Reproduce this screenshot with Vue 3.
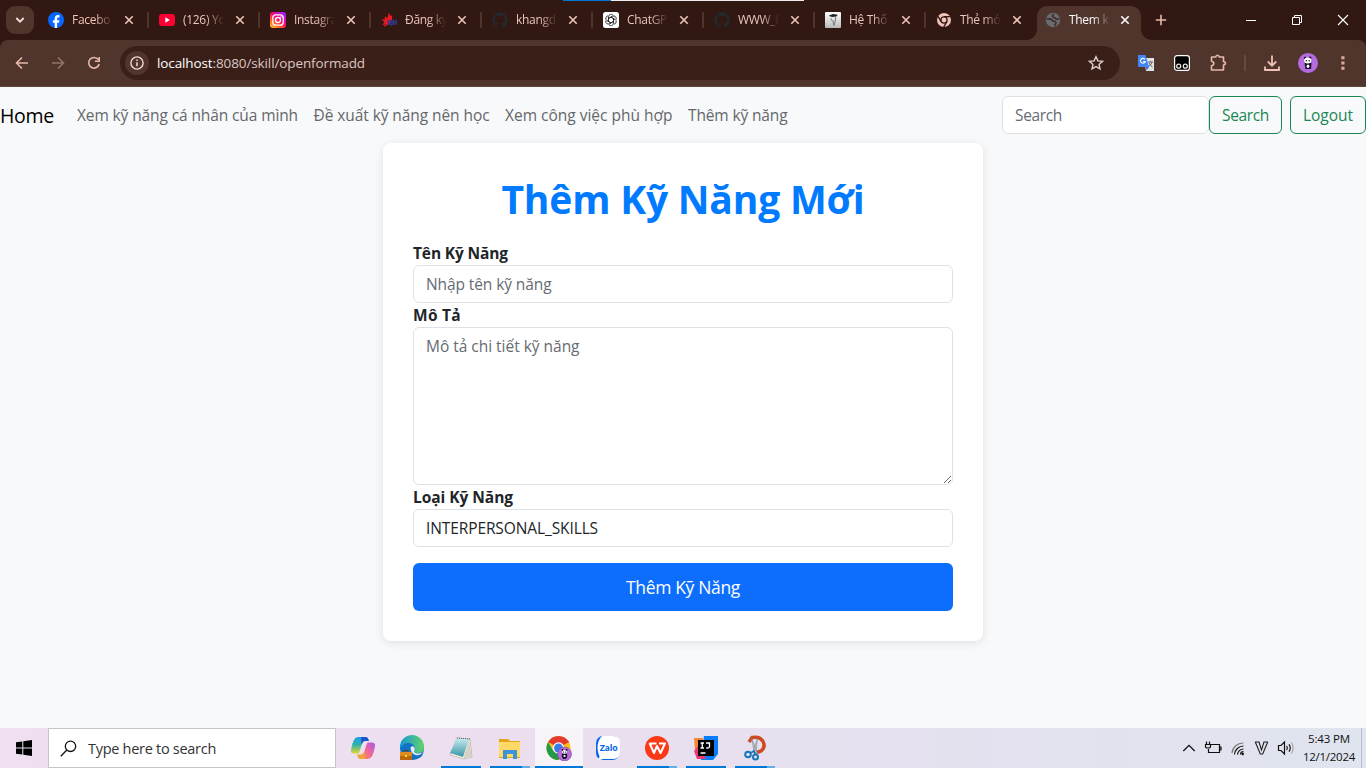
<script setup>
const tabs = [
  { icon: 'facebook', title: 'Facebo' },
  { icon: 'youtube', title: '(126) Yo' },
  { icon: 'instagram', title: 'Instagra' },
  { icon: 'iuh', title: 'Đăng ký' },
  { icon: 'github', title: 'khangd' },
  { icon: 'chatgpt', title: 'ChatGP' },
  { icon: 'github', title: 'WWW_f' },
  { icon: 'school', title: 'Hệ Thố' },
  { icon: 'chrome', title: 'Thẻ mớ' },
  { icon: 'globe', title: 'Them k', active: true },
]

const links = [
  { text: 'Xem kỹ năng cá nhân của mình', width: 221 },
  { text: 'Đề xuất kỹ năng nên học', width: 176 },
  { text: 'Xem công việc phù hợp', width: 167.5 },
  { text: 'Thêm kỹ năng', width: 99.5 },
]

const apps = [
  { name: 'copilot' },
  { name: 'edge' },
  { name: 'notepad', run: true },
  { name: 'explorer', run: true, multi: true },
  { name: 'chrome', active: true },
  { name: 'zalo' },
  { name: 'wps', run: true, multi: true },
  { name: 'intellij', run: true },
  { name: 'snip', run: true, multi: true },
]

const ctx = document.createElement('canvas').getContext('2d')

// Spreads the text of an element over a given width through letter spacing.
const vFit = {
  mounted(el, { value }) {
    const text = el.value || el.placeholder || el.textContent.trim()
    const cs = getComputedStyle(el)
    ctx.font = `${cs.fontWeight} ${cs.fontSize} ${cs.fontFamily}`
    const gap = (value - ctx.measureText(text).width) / text.length
    el.style.letterSpacing = `${gap.toFixed(3)}px`
  },
}
</script>

<template>
  <div class="screen">
    <div class="topline"><i></i><b></b></div>
    <header class="tabstrip">
      <div class="tabsearch">
        <svg width="10" height="8" viewBox="0 0 10 8"><path d="M1.3 2 5 5.7 8.7 2" fill="none" stroke="#f5dcd5" stroke-width="1.8" /></svg>
      </div>
      <div v-for="(t, i) in tabs" :key="i" class="tab" :class="{ active: t.active, last: i === 8 }">
        <svg class="fav" width="16" height="16" viewBox="0 0 16 16">
          <g v-if="t.icon === 'facebook'">
            <circle cx="8" cy="8" r="8" fill="#0866ff" />
            <path d="M6.7 16v-5.3H4.9V8.2h1.8V7c0-2.7 1.2-3.9 3.4-3.9.5 0 1 .1 1.4.2v2.2h-1c-1 0-1.4.4-1.4 1.4v1.3h2.3l-.4 2.5H9.1V16z" fill="#fff" />
          </g>
          <g v-else-if="t.icon === 'youtube'">
            <rect y="2" width="16" height="12" rx="3" fill="#ff0033" /><path d="m6.3 5.3 4.6 2.7-4.6 2.7z" fill="#fff" />
          </g>
          <g v-else-if="t.icon === 'instagram'">
            <defs><linearGradient id="ig" x1="0" y1="1" x2=".8" y2="0"><stop offset="0" stop-color="#ffd22e" /><stop offset=".3" stop-color="#ff6a1f" /><stop offset=".6" stop-color="#fa0578" /><stop offset="1" stop-color="#a51cff" /></linearGradient></defs>
            <rect width="16" height="16" rx="3" fill="url(#ig)" />
            <rect x="2.8" y="2.8" width="10.4" height="10.4" rx="3" fill="none" stroke="#fff" stroke-width="1.3" />
            <circle cx="8" cy="8" r="2.5" fill="none" stroke="#fff" stroke-width="1.3" /><circle cx="11" cy="5" r=".7" fill="#fff" />
          </g>
          <g v-else-if="t.icon === 'iuh'">
            <path d="M8 .5 9.5 4l1.800-1-.3 4.500L8 13 5 12.500l-4 .5 2.500-2.500L.3 7l3.200.8L4 4.300l2.200 2z" fill="#e8191f" />
            <path d="M3 14q3-.2 5-3" stroke="#e8191f" fill="none" /><path d="M7.300 8v5M9 8v3.500q0 1.500 1 1.500t1-1.500V8M12.600 7.500V13M15.200 7.500V13M12.600 10.300h2.600" fill="none" stroke="#2f3a8c" stroke-width="1.400" />
          </g>
          <path v-else-if="t.icon === 'github'" fill="#24292f" d="M8 .2a8 8 0 0 0-2.5 15.5c.4.1.5-.2.5-.4v-1.5c-2.2.5-2.7-1-2.7-1-.4-.9-.9-1.2-.9-1.2-.7-.5.1-.5.1-.5.8.1 1.200.8 1.200.8.7 1.300 1.900.9 2.300.7.1-.5.3-.9.5-1.100-1.800-.2-3.600-.9-3.600-4 0-.9.3-1.600.8-2.100-.1-.2-.4-1 .1-2.100 0 0 .7-.2 2.200.8a7.500 7.500 0 0 1 4 0c1.500-1 2.200-.8 2.200-.8.4 1.100.2 1.900.1 2.100.5.6.8 1.300.8 2.100 0 3.100-1.900 3.700-3.600 3.900.3.3.5.8.5 1.500v2.300c0 .2.1.5.5.4A8 8 0 0 0 8 .2z" />
          <g v-else-if="t.icon === 'chatgpt'">
            <rect width="16" height="16" rx="2.500" fill="#fff" />
            <g fill="none" stroke="#222" stroke-width=".8">
              <path v-for="n in 6" :key="n" :transform="`rotate(${n * 60} 8 8)`" d="M5.500 9.400V4.900A2.600 2.600 0 0 1 10.200 3.400M8 5.100l3.700 2.100" />
            </g>
          </g>
          <g v-else-if="t.icon === 'school'">
            <defs><linearGradient id="sg" x1="0" y1="0" x2="0" y2="1"><stop offset="0" stop-color="#fff" /><stop offset="1" stop-color="#b9b9b9" /></linearGradient></defs>
            <rect width="16" height="16" rx="1" fill="url(#sg)" /><path d="M4 3.500 8 2l4.500.8-.5 1.500-4 .7-3-.5z" fill="#222" /><path d="M6 6q0 4 3.500 3M10.500 4.500v4L9 13.500 8 10" fill="none" stroke="#666" stroke-width=".8" />
          </g>
          <g v-else-if="t.icon === 'chrome'">
            <circle cx="8" cy="8" r="7" fill="#efc3b7" />
            <circle cx="8" cy="8" r="3.100" fill="none" stroke="#321812" stroke-width="1.300" />
            <path d="M8 4.700h6.400M5.100 9.600 1.900 4.200M10.900 9.600l-3.200 5.500" stroke="#321812" stroke-width="1.300" />
          </g>
          <g v-else>
            <circle cx="8" cy="8" r="7.200" fill="#686d73" />
            <path d="M1.500 7q4.500-.5 5.500 1t3.300 1.500Q12 12 9 13.700M9 2Q6 4 8.500 5.300t2.500 1.500q2 1 3.500-.3" fill="none" stroke="#432c26" stroke-width="1.600" />
          </g>
        </svg>
        <span class="tabtitle">{{ t.title }}</span>
        <svg class="x" width="10" height="10" viewBox="0 0 10 10"><path d="m1.300 1.300 7.400 7.400M8.700 1.300 1.300 8.700" stroke="currentColor" stroke-width="1.600" /></svg>
      </div>
      <svg class="plus" width="12" height="12" viewBox="0 0 12 12"><path d="M6 .8v10.400M.8 6h10.400" stroke="#e8b8ab" stroke-width="1.600" /></svg>
      <div class="wincontrols">
        <svg width="12" height="12" viewBox="0 0 12 12"><path d="M1 6.500h10" stroke="#fff" /></svg>
        <svg width="12" height="12" viewBox="0 0 12 12"><path d="M1.500 3.500h7v7h-7zM3.500 3.500v-2h7v7h-2" fill="none" stroke="#fff" /></svg>
        <svg width="12" height="12" viewBox="0 0 12 12"><path d="m1 1 10 10M11 1 1 11" stroke="#fff" stroke-width="1.100" /></svg>
      </div>
    </header>

    <div class="toolbar">
      <div class="navicons">
        <svg width="14" height="14" viewBox="0 0 14 14"><path d="M13 7H2M7 1.500 1.500 7 7 12.500" fill="none" stroke="#e8b8ab" stroke-width="1.600" /></svg>
        <svg width="14" height="14" viewBox="0 0 14 14"><path d="M1 7h11M7 1.500 12.500 7 7 12.500" fill="none" stroke="#92736b" stroke-width="1.600" /></svg>
        <svg width="14" height="14" viewBox="0 0 14 14"><path d="M11.300 3.600A5.300 5.300 0 1 0 12.200 8M12.200 1v4.300H7.900" fill="none" stroke="#e8b8ab" stroke-width="1.600" /></svg>
      </div>
      <div class="omnibox">
        <span class="info"><svg width="14" height="14" viewBox="0 0 14 14"><circle cx="7" cy="7" r="6.100" fill="none" stroke="#f0d8d1" stroke-width="1.400" /><path d="M7 6.200v4M7 3.500v1.500" stroke="#f0d8d1" stroke-width="1.500" /></svg></span>
        <span v-fit="208" class="url"><em>localhost</em>:8080/skill/openformadd</span>
        <svg width="16" height="16" viewBox="0 0 16 16"><path d="m8 1.700 1.900 4.200 4.500.5-3.400 3 1 4.500L8 11.600l-4 2.300 1-4.500-3.400-3 4.500-.5z" fill="none" stroke="#e0cfca" stroke-width="1.400" /></svg>
      </div>
      <div class="ext">
        <svg width="18" height="18" viewBox="0 0 18 18"><path d="M7 4h10v13H9z" fill="#dfe3e6" /><path d="M11 8h5M13.500 7v1M15 8q-.5 3-3.500 4.500M12 9q1 2.500 3.500 4" stroke="#667" fill="none" /><path d="M1 1h7.500l3.500 12H2q-1 0-1-1z" fill="#4285f4" /><path d="M9 13h3l-2.500 3.500z" fill="#3367d6" /><path d="M8 5.600A2.400 2.400 0 1 0 8.200 7.500H6.200" stroke="#fff" stroke-width="1.100" fill="none" /></svg>
        <svg width="18" height="18" viewBox="0 0 18 18"><rect x="1.600" y="1.600" width="14.800" height="14.800" rx="2.500" fill="#000" stroke="#fff" stroke-width="1.200" /><circle cx="5.700" cy="12.200" r="2" fill="none" stroke="#e9e3dc" stroke-width="1.300" /><circle cx="12.300" cy="12.200" r="2" fill="none" stroke="#e9e3dc" stroke-width="1.300" /></svg>
        <svg width="18" height="18" viewBox="0 0 18 18"><path d="M2.500 3h4.300q.2-1.800 1.700-1.800T10.200 3h4.300v4.600q2 .2 2 1.700t-2 1.700v5h-12v-4.300q2.300-.4 2.300-2.200T2.500 7.300z" fill="none" stroke="#e8b8ab" stroke-width="1.600" stroke-linejoin="round" /></svg>
        <i></i>
        <svg width="18" height="18" viewBox="0 0 18 18"><path d="M9 1.500v10M4.800 7.500 9 11.700l4.200-4.200M2 12.500V16h14v-3.500" fill="none" stroke="#efc0b3" stroke-width="1.800" /></svg>
        <svg width="20" height="20" viewBox="0 0 20 20"><circle cx="10" cy="10" r="10" fill="#b66ae0" /><circle cx="7" cy="5" r="1.200" fill="#181020" /><circle cx="12.200" cy="4.800" r="1.200" fill="#181020" /><path d="M6.500 10h7l-.5 6H7.500z" fill="#181020" /><ellipse cx="9.700" cy="7.500" rx="3.600" ry="3" fill="#fff" /><circle cx="8.300" cy="7.800" r=".7" /><circle cx="11.200" cy="7.800" r=".7" /><ellipse cx="10" cy="13.300" rx="1.400" ry="1.700" fill="#fff" /></svg>
        <svg width="4" height="16" viewBox="0 0 4 16"><path d="M.3 1.200h3.200v3H.3zM.3 6.500h3.200v3H.3zM.3 11.800h3.200v3H.3z" fill="#dba99c" /></svg>
      </div>
    </div>

    <main class="page">
      <nav class="navbar">
        <a v-fit="54" class="brand">Home</a>
        <a v-for="l in links" :key="l.text" class="link" :style="{ width: l.width + 'px' }"><span v-fit="l.width">{{ l.text }}</span></a>
        <form class="search">
          <input v-fit="47" class="field" placeholder="Search" />
          <button type="button" class="outline s"><span v-fit="47">Search</span></button>
        </form>
        <button type="button" class="outline l"><span v-fit="50">Logout</span></button>
      </nav>
      <section class="card">
        <h1><span v-fit="363">Thêm Kỹ Năng Mới</span></h1>
        <label><span v-fit="95">Tên Kỹ Năng</span></label>
        <input v-fit="125.500" class="field" placeholder="Nhập tên kỹ năng" />
        <label><span v-fit="48">Mô Tả</span></label>
        <textarea v-fit="153.500" class="field area" placeholder="Mô tả chi tiết kỹ năng"></textarea>
        <label><span v-fit="100">Loại Kỹ Năng</span></label>
        <div class="field"><span v-fit="172">INTERPERSONAL_SKILLS</span></div>
        <button type="button" class="submit"><span v-fit="114">Thêm Kỹ Năng</span></button>
      </section>
    </main>

    <footer class="taskbar">
      <div class="start"><svg width="16" height="16" viewBox="0 0 16 16"><path d="M0 2.300 6.300 1.400V7.500H0zM7.300 1.200 16 0v7.500H7.300zM0 8.500h6.300v6.100L0 13.700zM7.300 8.500H16V16l-8.700-1.200z" /></svg></div>
      <div class="tasksearch">
        <svg width="17" height="17" viewBox="0 0 17 17"><circle cx="10.500" cy="6.300" r="5.200" fill="none" stroke="#111" stroke-width="1.300" /><path d="M6.800 10 .8 16.200" stroke="#111" stroke-width="1.300" /></svg>
        <span v-fit="128">Type here to search</span>
      </div>
      <div class="apps">
        <div v-for="a in apps" :key="a.name" class="app" :class="{ on: a.active, run: a.run, multi: a.multi }">
          <svg width="26" height="26" viewBox="0 0 26 26">
            <g v-if="a.name === 'copilot'">
              <defs>
                <linearGradient id="ca" x1="0" y1="0" x2="0" y2="1"><stop offset="0" stop-color="#1e9ce8" /><stop offset=".45" stop-color="#29b3b0" /><stop offset="1" stop-color="#e3d62b" /></linearGradient>
                <linearGradient id="cb" x1="1" y1="0" x2="0" y2="1"><stop offset="0" stop-color="#a45bea" /><stop offset=".5" stop-color="#f0649c" /><stop offset="1" stop-color="#ff9450" /></linearGradient>
              </defs>
              <path d="M8 2h7q-2 2-3.500 8t-3 8.500H4q-3.500 0-3-3.500Q3 2 8 2z" fill="url(#ca)" />
              <path d="M11 2h5q2 0 3 4h-4q-2 0-3.500 4z" fill="#1757ce" />
              <path d="M18 24h-7q2-2 3.500-8t3-8.500H22q3.500 0 3 3.500-2 13-7 13z" fill="url(#cb)" />
              <path d="M15 24h-5q-2 0-3-4.500h4q2 0 3.500-4z" fill="#f2a43c" />
            </g>
            <g v-else-if="a.name === 'edge'">
              <defs><linearGradient id="ea"><stop offset="0" stop-color="#1697dd" /><stop offset="1" stop-color="#62d465" /></linearGradient></defs>
              <circle cx="13" cy="13" r="12" fill="#1173c6" />
              <path d="M1 12A12 12 0 0 1 25 12q0 6-6.500 6-4 0-3.500-2 1.500-2 .5-4.500-2-4-7-3.500T1 13.500z" fill="url(#ea)" />
              <path d="M11.500 13q0 6 6 6.500 4 .2 7-2.500l-1.500 4q-2.500 3-6 3-5.500-2-5.500-11z" fill="#1173c6" />
              <path d="M11.500 12.500q1.500-2 3.800-.5 1 3-.3 4 0 2.500 4 2.500 3.500 0 5-1.800-3 4.500-7.500 3.300-5-1.500-5-7.500z" fill="#e9e7f3" />
              <path d="M1 18h12v7H1z" fill="#b96709" /><path d="M1 17h12v4H1z" fill="#dc8b1e" /><path d="M5 17v-1.500h4V17" stroke="#643a0d" fill="none" /><path d="M6 20h2v2H6z" fill="#ffd052" />
            </g>
            <g v-else-if="a.name === 'notepad'">
              <defs><linearGradient id="na" x1="0" y1="0" x2="0" y2="1"><stop offset="0" stop-color="#c8edf0" /><stop offset="1" stop-color="#3795a8" /></linearGradient></defs>
              <path d="m9 3 13 1 2 18-8 2-14-4z" fill="#f3f0e3" stroke="#a8a694" stroke-width=".6" /><path d="m9 3 12 1-6 18-13-4z" fill="url(#na)" /><path d="m21 4 2.500 17.500-8 2z" fill="#d5d2c6" /><path d="m9 3 13 1" stroke="#555" stroke-dasharray="1" />
            </g>
            <g v-else-if="a.name === 'explorer'">
              <path d="M2 4h9l2 2h10v17H2z" fill="#e3a51b" /><path d="M2 7h21v15H2z" fill="#ffd866" /><path d="M6 15h14v9h-4v-5h-6v5H6z" fill="#3c94d8" />
            </g>
            <g v-else-if="a.name === 'chrome'">
              <circle cx="12.500" cy="13" r="12" fill="#fbc116" />
              <path d="M12.500 13 2.100 7A12 12 0 0 1 22.900 7z" fill="#e33b2e" /><path d="M2.100 7A12 12 0 0 0 12.500 25l5.200-9-10.400 0z" fill="#239a4b" /><path d="M12.500 7h10.400" stroke="#e33b2e" />
              <circle cx="12.500" cy="13" r="5.800" fill="#fff" /><circle cx="12.500" cy="13" r="4.500" fill="#377ee8" />
              <circle cx="18.500" cy="19" r="7" fill="#b66ae0" stroke="#76439a" stroke-width=".6" /><ellipse cx="18.500" cy="20.500" rx="2.700" ry="3.500" fill="#181020" /><circle cx="16.500" cy="15" r="1" /><circle cx="20.500" cy="15" r="1" /><ellipse cx="18.500" cy="16.900" rx="2.500" ry="1.900" fill="#fff" /><circle cx="17.500" cy="17" r=".6" /><circle cx="19.500" cy="17" r=".6" /><circle cx="18.500" cy="21" r="1.100" fill="#fff" />
            </g>
            <g v-else-if="a.name === 'zalo'">
              <rect x="1" y="1" width="23.500" height="24" rx="7" fill="#0868ec" /><path d="M7 1h11q7 0 7 7v9q0 7-7 7H8q-3 1-5 .5 1.500-1 1.500-3Q2.500 18 2.500 12T7 1z" fill="#fff" />
              <text x="13.700" y="15.500" text-anchor="middle" font-size="8.800" font-weight="700" fill="#0868ec" textLength="18">Zalo</text>
            </g>
            <g v-else-if="a.name === 'wps'">
              <circle cx="13" cy="13" r="12" fill="#fa3a17" /><path d="M5.500 8.500h7M5.500 8l4.500 10 3-7 3.500 7L21 8.500h-6" fill="none" stroke="#fff" stroke-width="2" stroke-linejoin="round" />
            </g>
            <g v-else-if="a.name === 'intellij'">
              <path d="M1 3h9l-3 15-5-3z" fill="#f58634" /><path d="M11 1h14v18l-5 6H8z" fill="#087cfa" /><path d="m1 16 5-6 7 14H4z" fill="#e93876" /><rect x="5" y="5" width="16" height="16" fill="#000" /><path d="M7.500 8H11M9.250 8v5M7.500 13H11M13 8h3.500v3.500q0 1.500-1.700 1.500H13.300M7.500 18h5" fill="none" stroke="#fff" stroke-width="1.300" />
            </g>
            <g v-else>
              <path d="M7 7 10 2.500q8-1.500 11 4t-2 9.500l-4 1.500" fill="none" stroke="#ce4920" stroke-width="3.500" /><path d="m9.500 3 6 15-3 1zM15.500 3l-1.500 15-3-1z" fill="#bfc7ce" stroke="#727e88" stroke-width=".5" />
              <circle cx="6" cy="19.500" r="2.800" fill="none" stroke="#1877bb" stroke-width="2" /><circle cx="13.500" cy="22" r="2.500" fill="none" stroke="#1877bb" stroke-width="2" /><path d="m8.500 18 3.500-2 1.500 4" stroke="#1877bb" stroke-width="1.600" fill="none" />
            </g>
          </svg>
        </div>
      </div>
      <div class="tray">
        <svg width="14" height="14" viewBox="0 0 14 14"><path d="m1.300 10 5.700-5.700L12.700 10" fill="none" stroke="#111" stroke-width="1.300" /></svg>
        <svg width="18" height="16" viewBox="0 0 18 16"><path d="M7 4.500h8.500v8H4.500V9M15.500 7h1.500v3h-1.500M2.500 1.500v2.500M5.500 1.500v2.500M1.500 4.500h5v2q0 1.500-2.500 1.500T1.500 6.500z" fill="none" stroke="#111" stroke-width="1.200" /></svg>
        <svg width="16" height="16" viewBox="0 0 16 16"><path d="M2 13A11 11 0 0 1 13.500 3" fill="none" stroke="#777" stroke-width="1.200" /><path d="M4.500 14.500A9 9 0 0 1 13.500 6M7.500 14.500a6 6 0 0 1 6-5.500M10.500 14.500a3 3 0 0 1 3-2.800" fill="none" stroke="#111" stroke-width="1.200" /><circle cx="12.700" cy="14" r="1.200" /></svg>
        <svg width="15" height="16" viewBox="0 0 15 16"><path d="M1 2h4.500M9.500 2H14M1.300 2 6.300 14h2.400L13.700 2M5 2l2.500 8L10 2" fill="none" stroke="#222" stroke-width="1.100" /></svg>
        <svg width="18" height="16" viewBox="0 0 18 16"><path d="M1.500 5.500H4L7.500 2v12L4 10.500H1.500z" fill="none" stroke="#111" stroke-width="1.200" /><path d="M9.700 6q1.300 2 0 4M12 4.300q2.500 3.700 0 7.400" fill="none" stroke="#111" stroke-width="1.200" /><path d="M14.300 2.500q3.700 5.500 0 11" fill="none" stroke="#999" /></svg>
      </div>
      <div class="clock"><span v-fit="42">5:43 PM</span><span v-fit="52">12/1/2024</span></div>
      <div class="desktop"></div>
    </footer>
  </div>
</template>

<style>
html, body { margin: 0; overflow: hidden; }
</style>

<style scoped>
* { box-sizing: border-box; }
.screen { position: relative; width: 1366px; height: 768px; display: flex; flex-direction: column; overflow: hidden; font-family: "Open Sans", "Noto Sans", sans-serif; background: linear-gradient(#321812 60px, #f8f9fa 60px); }
svg { display: block; flex: none; }
span, a { white-space: nowrap; }
.topline { position: absolute; top: 0; left: 563px; display: flex; z-index: 2; }
.topline i { width: 48px; height: 1px; background: #0078d7; }
.topline b { width: 193px; height: 1px; background: #f1eeee; }
.tabstrip { height: 40px; flex: none; background: #321812; display: flex; }
.tabsearch { width: 28px; height: 28px; margin: 6px 3px 0 6px; border-radius: 9px; background: #50352d; display: flex; align-items: center; justify-content: center; flex: none; }
.tab { position: relative; width: 111px; height: 40px; flex: none; display: flex; align-items: center; padding-left: 11px; color: #edc5ba; }
.tab:not(.active):not(.last)::after { content: ""; position: absolute; right: -1px; top: 12px; width: 2px; height: 16px; background: #50352d; border-radius: 1px; }
.tabtitle { width: 42px; margin-left: 8px; font-size: 12px; line-height: 18px; letter-spacing: -.3px; -webkit-mask-image: linear-gradient(90deg, #000 55%, transparent 98%); mask-image: linear-gradient(90deg, #000 55%, transparent 98%); }
.x { margin-left: 10px; }
.tab.active { width: 104px; height: 34px; margin: 6px 0 0 1px; padding: 0 0 6px 8px; background: #50352d; border-radius: 10px 10px 0 0; color: #fff; }
.tab.active .x { margin-left: 9px; }
.tab.active::before, .tab.active::after { content: ""; position: absolute; bottom: 0; width: 10px; height: 10px; }
.tab.active::before { left: -10px; background: radial-gradient(circle at 0 0, transparent 9.500px, #50352d 10px); }
.tab.active::after { right: -10px; background: radial-gradient(circle at 100% 0, transparent 9.500px, #50352d 10px); }
.plus { margin: 14px 0 0 14px; }
.wincontrols { margin-left: auto; display: flex; gap: 34px; padding: 14px 17px 0 0; }
.toolbar { height: 47px; flex: none; background: linear-gradient(#50352d, #50352d) 0 0 / 100% 46px no-repeat #60463f; border-radius: 8px 8px 0 0; display: flex; align-items: flex-start; }
.navicons { width: 120px; display: flex; gap: 22px; padding: 16px 0 0 15px; }
.omnibox { width: 1000px; height: 34px; margin-top: 6px; border-radius: 17px; background: #3a1f19; display: flex; align-items: center; padding: 0 16px 0 5px; }
.omnibox > svg { margin-left: auto; }
.info { width: 24px; height: 24px; border-radius: 12px; background: #50352d; display: flex; align-items: center; justify-content: center; }
.url { margin-left: 8px; font-size: 13.500px; color: #dbc7c1; }
.url em { font-style: normal; color: #fff; }
.ext { display: flex; align-items: center; height: 46px; margin-left: 17px; gap: 18px; }
.ext i { width: 2px; height: 16px; background: #69483f; margin: 0 -1px 0 -1px; }
.ext svg:nth-of-type(5) { margin-left: -1px; }
.ext svg:nth-of-type(6) { margin-left: 5px; }
.page { height: 641px; background: #f8f9fa; flex: none; }
.navbar { height: 56px; display: flex; align-items: center; color: #212529; font-size: 15.500px; }
.brand { font-size: 19.500px; width: 54px; color: #000; margin-right: 7.500px; }
.link { color: #65676a; margin-left: 15.500px; padding-bottom: 1px; }
.search { display: flex; margin-left: auto; }
.search .field { width: 207px; }
.field { display: block; width: 100%; height: 38px; padding: 6px 12px; border: 1px solid #dee2e6; border-radius: 6px; background: #fff; color: #212529; font: 15.500px/24px "Open Sans", "Noto Sans", sans-serif; outline: 0; }
.field::placeholder { color: #656b72; opacity: 1; }
.outline { height: 38px; padding: 0 0 0 12px; text-align: left; border: 1px solid #198754; border-radius: 6px; background: transparent; color: #198754; font: 15.500px/24px "Open Sans", "Noto Sans", sans-serif; }
.s { width: 73px; }
.l { width: 76px; margin-left: 8px; }
.card { width: 600px; height: 498px; margin: 0 auto; padding: 30px; background: #fff; border-radius: 8px; box-shadow: 0 2px 10px rgba(0, 0, 0, .1); display: flex; flex-direction: column; }
h1 { margin: 0 0 20px; height: 48px; font-size: 39px; line-height: 51px; font-weight: 700; text-align: center; color: #007bff; }
label { height: 24px; line-height: 24px; font-size: 15.500px; font-weight: 700; color: #212529; }
.area { height: 158px; resize: vertical; flex: none; }
.submit { height: 48px; margin-top: 16px; border: 0; border-radius: 6px; background: #0d6efd; color: #fff; font: 17.500px/48px "Open Sans", "Noto Sans", sans-serif; padding: 0; }
.taskbar { height: 40px; flex: none; display: flex; background: linear-gradient(90deg, #efdff0, #ebdfef 40%, #e4e1ef 70%, #dfe4ee); color: #111; }
.start { width: 48px; display: flex; align-items: center; justify-content: center; }
.tasksearch { width: 288px; height: 40px; border: 1px solid #c5c5c7; background: #fff; display: flex; align-items: center; padding-left: 11px; gap: 11px; font-size: 14.500px; color: #333; }
.apps { display: flex; margin-left: 3px; gap: 1px; }
.app { position: relative; width: 48px; display: flex; justify-content: center; align-items: center; }
.app.on { background: #f7f3f9; }
.app.on::after, .app.run::after { content: ""; position: absolute; bottom: 0; left: 4px; width: 40px; height: 2px; background: #0078d7; }
.app.on::after { left: 0; width: 48px; }
.app.multi::after { background: linear-gradient(90deg, #0078d7 32px, #65aee5 32px); }
.tray { margin-left: auto; display: flex; align-items: center; gap: 8px; }
.clock { width: 52px; margin: 2px 0 0 8px; display: flex; flex-direction: column; align-items: center; font-size: 11.500px; line-height: 18px; }
.desktop { width: 5px; margin-left: 6px; border-left: 1px solid #b8bdc8; }
</style>
